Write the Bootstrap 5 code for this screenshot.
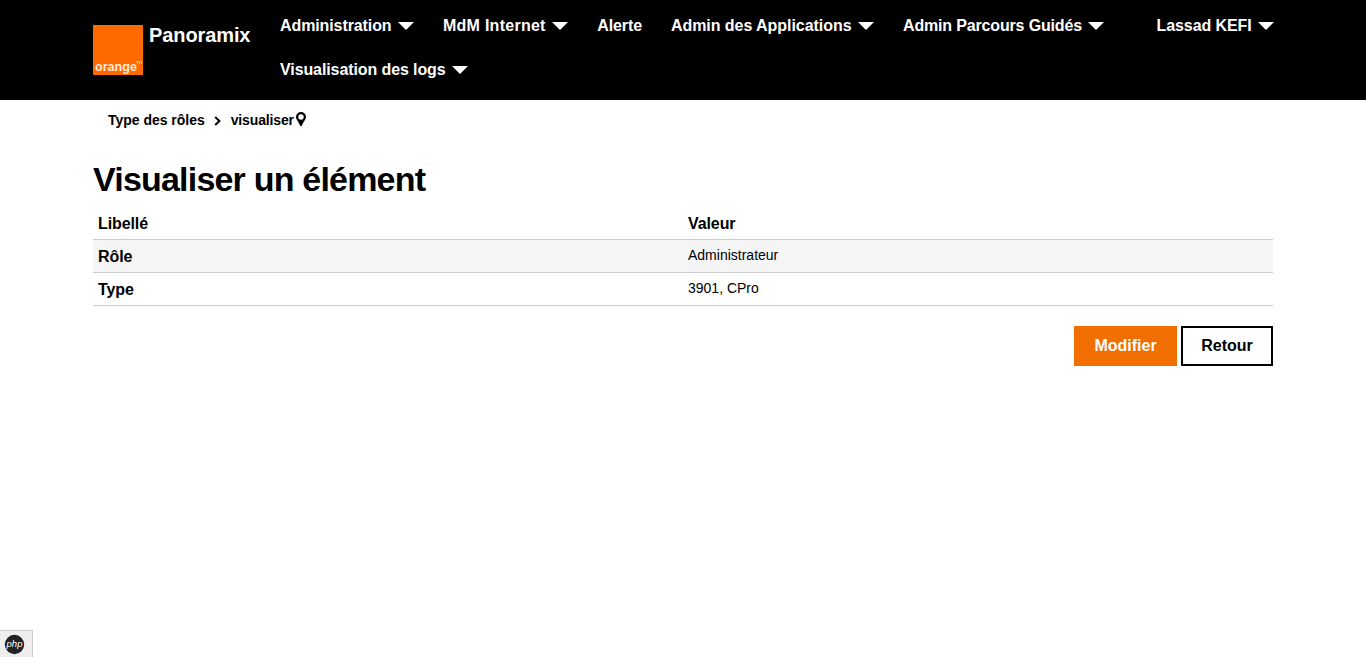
<!DOCTYPE html>
<html lang="fr">
<head>
<meta charset="utf-8">
<meta name="viewport" content="width=device-width, initial-scale=1">
<title>Panoramix</title>
<link href="https://cdn.jsdelivr.net/npm/bootstrap@5.3.0/dist/css/bootstrap.min.css" rel="stylesheet">
<style>
  body { font: 400 14px/18px "Liberation Sans", Arial, sans-serif; color: #000; }
  .page { width: 1180px; margin: 0 auto; }
  .topbar { background: #000; height: 100px; }
  .logo { width: 50px; height: 50px; margin-top: 25px; }
  .app-name { font-size: 20px; line-height: 24px; font-weight: 700; letter-spacing: -.1px; color: #fff; margin: 23px 0 0 6px; width: 131px; }
  .menu { width: 860px; column-gap: 29px; margin-top: 4px; }
  .menu-link { font-size: 16px; line-height: 44px; height: 44px; font-weight: 700; letter-spacing: -.1px; color: #fff; text-decoration: none; white-space: nowrap; display: flex; align-items: center; }
  .menu-link:hover { color: #f16e00; }
  .menu-link.wide { letter-spacing: .26px; }
  .menu-link.normal { letter-spacing: -.05px; }
  .user-link { margin-right: -1px; }
  .arrow { border: 8px solid transparent; border-top: 8px solid currentColor; border-bottom: 0; margin-left: 6.5px; }
  .menu-link.guides { letter-spacing: -.16px; }
  .crumbs { font-size: 14px; font-weight: 700; height: 40px; padding-left: 15px; letter-spacing: -.02px; }
  .crumbs .current { letter-spacing: -.15px; }
  .title { font-size: 34px; line-height: 40px; font-weight: 700; letter-spacing: -.8px; margin: 19px 0 7px; }
  .details { table-layout: fixed; margin-bottom: 20px; color: #000; }
  .details th, .details td { height: 33px; padding: 0 5px; border-bottom: 1px solid #ccc; vertical-align: middle; }
  .details th { font-size: 16px; letter-spacing: -.1px; padding-top: 3px; }
  .details td { padding-bottom: 1px; }
  .details .tinted > * { background: #f5f5f5; }
  .action { border: 2px solid #000; border-radius: 0; font-size: 16px; line-height: 20px; font-weight: 700; height: 40px; padding: 8px 0; color: #000; width: 92px; }
  .action-main { background: #f16e00; border-color: #f16e00; color: #fff; width: 103px; }
  .debug-tab { width: 33px; height: 27px; background: #eee; border: 1px solid #ccc; border-width: 1px 1px 0 0; }
</style>
</head>
<body>
<header class="topbar">
  <div class="page d-flex align-items-start">
    <svg class="logo flex-shrink-0" viewBox="0 0 50 50"><rect width="50" height="50" fill="#ff6a00"/><text x="2" y="46" fill="#ffe9da" font-family="Liberation Sans, Arial, sans-serif" font-weight="700" font-size="13" textLength="42" lengthAdjust="spacingAndGlyphs">orange</text><path d="M43 36.500h3M44.500 36.500v2.500M46.500 39v-2.500l1 1 1-1v2.500" stroke="#ffd2b0" stroke-width=".8" fill="none"/></svg>
    <div class="app-name flex-shrink-0">Panoramix</div>
    <nav class="menu d-flex flex-wrap flex-shrink-0">
      <a class="menu-link" href="#">Administration<span class="arrow"></span></a>
      <a class="menu-link wide" href="#">MdM Internet<span class="arrow"></span></a>
      <a class="menu-link" href="#">Alerte</a>
      <a class="menu-link normal" href="#">Admin des Applications<span class="arrow"></span></a>
      <a class="menu-link guides" href="#">Admin Parcours Guidés<span class="arrow"></span></a>
      <a class="menu-link" href="#">Visualisation des logs<span class="arrow"></span></a>
    </nav>
    <a class="menu-link user-link ms-auto mt-1" href="#">Lassad KEFI<span class="arrow"></span></a>
  </div>
</header>
<main class="page">
  <div class="crumbs d-flex align-items-center"><span>Type des rôles</span>
    <svg width="8" height="10" viewBox="0 0 8 10" style="margin:1px 9px 0 9px"><path d="M1.200 1l4.200 4-4.200 4" fill="none" stroke="#000" stroke-width="2"/></svg>
    <span class="current">visualiser</span>
    <svg width="10" height="14" viewBox="0 0 10 14" style="margin:-3px 0 0 2px"><path fill-rule="evenodd" d="M5 0a5 5 0 0 1 5 5c0 2.500-2.400 4-4 8.500q-1 1-2 0C2.400 9 0 7.500 0 5a5 5 0 0 1 5-5zm0 2.300a2.700 2.700 0 1 0 0 5.400 2.700 2.700 0 0 0 0-5.400z"/></svg>
  </div>
  <h1 class="title">Visualiser un élément</h1>
  <table class="details w-100">
    <thead><tr><th>Libellé</th><th>Valeur</th></tr></thead>
    <tbody>
      <tr class="tinted"><th>Rôle</th><td>Administrateur</td></tr>
      <tr><th>Type</th><td>3901, CPro</td></tr>
    </tbody>
  </table>
  <div class="d-flex justify-content-end gap-1">
    <a class="btn action action-main" href="#">Modifier</a>
    <a class="btn action" href="#">Retour</a>
  </div>
</main>
<div class="debug-tab fixed-bottom">
  <svg class="d-block" width="32" height="26" viewBox="0 0 32 26"><circle cx="14.500" cy="13.500" r="9.700" fill="#222"/><text x="6.500" y="16" font-family="Liberation Sans, Arial, sans-serif" font-size="9" font-style="italic" fill="#fff" textLength="16" lengthAdjust="spacingAndGlyphs">php</text></svg>
</div>
<script src="https://cdn.jsdelivr.net/npm/bootstrap@5.3.0/dist/js/bootstrap.bundle.min.js"></script>
</body>
</html>
